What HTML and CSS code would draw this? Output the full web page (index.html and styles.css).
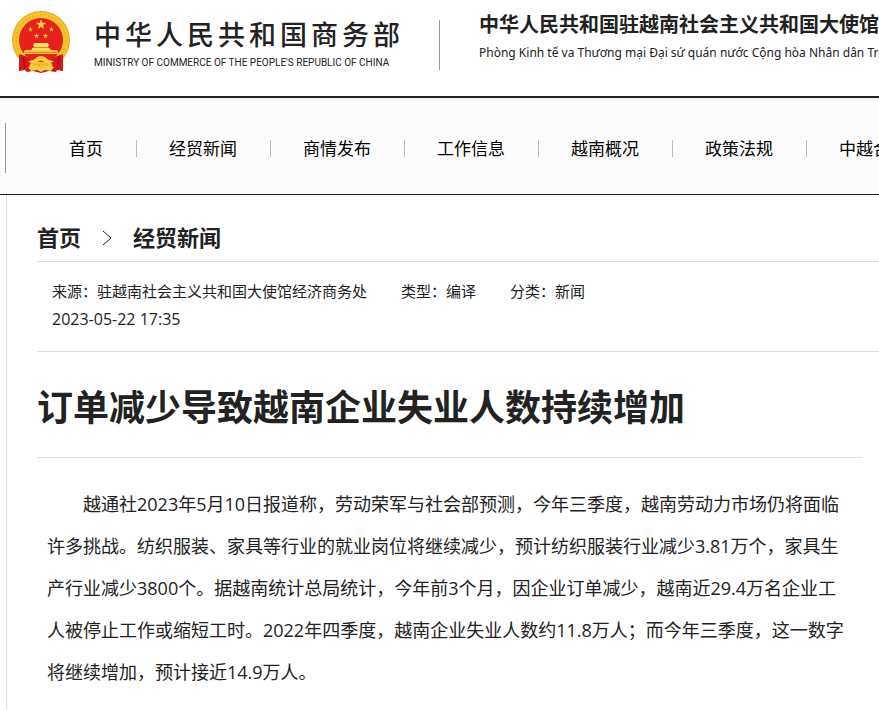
FILE: index.html
```
<!DOCTYPE html>
<html lang="zh-CN">
<head>
  <meta charset="UTF-8">
  <meta name="viewport" content="width=device-width, initial-scale=1.0">
  <title>订单减少导致越南企业失业人数持续增加</title>
  <link rel="stylesheet" href="styles.css">
</head>
<body>
  <header class="header">
    <a class="logo" href="#">
      <svg class="emblem" viewBox="0 0 58 62" aria-hidden="true">
        <path d="M8 42L7 60l6-1 2 2 6-1 8 2 8-2 7 1 1-2 6 1-1-18z" fill="#c9141b"/>
        <circle cx="29" cy="29" r="29" fill="#e3a51c"/>
        <circle cx="29" cy="29" r="28" fill="#f6c42c"/>
        <circle cx="29" cy="29" r="25" fill="none" stroke="#eeb426" stroke-width="2" stroke-dasharray="2 2"/>
        <circle cx="29" cy="29" r="22" fill="#e5211d"/>
        <path d="M29 8l1.300 3.700 3.900.1-3.100 2.400 1.100 3.800-3.200-2.200-3.200 2.200 1.100-3.800-3.100-2.400 3.900-.1z" fill="#ffd33a"/>
        <g fill="#f5b934">
          <path id="star" d="M18.500 15.500l.7 1.900h2l-1.600 1.300.6 2-1.700-1.200-1.700 1.200.6-2-1.600-1.300h2z"/>
          <use href="#star" x="21"/>
          <use href="#star" x="6" y="6.500"/>
          <use href="#star" x="15" y="6.500"/>
        </g>
        <path d="M22 32h14l1 3h-1v2h2l1 4H19l1-4h2v-2h-1z" fill="#ffd966"/>
        <path d="M21 36.500h16" stroke="#d98b1c" stroke-width="1"/>
        <path d="M13 39h32l2 4H11z" fill="#f9c63a"/>
        <path d="M13 41.500h32" stroke="#e08a1d" stroke-width="1"/>
        <path d="M7 43q8 2 13 6l-5 11-2-2-6 2zM51 43q-8 2-13 6l5 11 2-2 6 2z" fill="#d3171c"/>
        <path d="M11 46l2 11M47 46l-2 11" stroke="#a80d13" stroke-width="1.500"/>
        <path d="M16 50q6 0 9-4 4-2 8 0 3 4 9 4-5 4-9 1-4-3-8 0-4 3-9-1z" fill="#f8ce48"/>
        <path d="M16 56q8-2 10 0l3 1 3-1q2-2 10 0l-3 4-6-1-4 2-4-2-6 1z" fill="#f6cf51"/>
      </svg>
      <span class="logo-text">
        <span class="logo-cn">中华人民共和国商务部</span>
        <span class="logo-en">MINISTRY OF COMMERCE OF THE PEOPLE'S REPUBLIC OF CHINA</span>
      </span>
    </a>
    <div class="office">
      <div class="office-cn">中华人民共和国驻越南社会主义共和国大使馆经济商务处</div>
      <div class="office-vn" lang="vi">Phòng Kinh tế va Thương mại Đại sứ quán nước Cộng hòa Nhân dân Trung Hoa</div>
    </div>
  </header>

  <nav class="nav">
    <ul class="nav-list">
      <li><a href="#">首页</a></li>
      <li><a href="#">经贸新闻</a></li>
      <li><a href="#">商情发布</a></li>
      <li><a href="#">工作信息</a></li>
      <li><a href="#">越南概况</a></li>
      <li><a href="#">政策法规</a></li>
      <li><a href="#">中越合作</a></li>
    </ul>
  </nav>

  <main class="main">
    <div class="crumbs">
      <a href="#">首页</a>
      <svg class="chevron" viewBox="0 -4 10 20" aria-hidden="true"><path d="M1 0l8 7-8 7" fill="none" stroke="#222" stroke-width="1"/></svg>
      <a href="#">经贸新闻</a>
    </div>
    <div class="meta">
      <span>来源：驻越南社会主义共和国大使馆经济商务处</span>
      <span>类型：编译</span>
      <span>分类：新闻</span>
      <time class="meta-time" datetime="2023-05-22T17:35">2023-05-22 17:35</time>
    </div>
    <article class="article">
      <h1>订单减少导致越南企业失业人数持续增加</h1>
      <p>越通社2023年5月10日报道称，劳动荣军与社会部预测，今年三季度，越南劳动力市场仍将面临许多挑战。纺织服装、家具等行业的就业岗位将继续减少，预计纺织服装行业减少3.81万个，家具生产行业减少3800个。据越南统计总局统计，今年前3个月，因企业订单减少，越南近29.4万名企业工人被停止工作或缩短工时。2022年四季度，越南企业失业人数约11.8万人；而今年三季度，这一数字将继续增加，预计接近14.9万人。</p>
    </article>
  </main>
</body>
</html>
```
FILE: styles.css
```
* {
  box-sizing: border-box;
  margin: 0;
  padding: 0;
}

body {
  font-family: "Open Sans", "Noto Sans CJK SC", sans-serif;
  color: #222;
  background: #fff;
  min-height: 100vh;
  display: flex;
  flex-direction: column;
  overflow-x: hidden;
}

a {
  color: inherit;
  text-decoration: none;
}

.header {
  display: flex;
  align-items: flex-start;
  height: 98px;
  padding: 11px 0 0 12px;
  border-bottom: 2px solid #222;
  overflow: hidden;
}

.logo {
  display: flex;
  flex-shrink: 0;
  gap: 24px;
}

.emblem {
  width: 58px;
  height: 62px;
}

.logo-text {
  display: flex;
  flex-direction: column;
  width: 310px;
  padding-top: 8px;
  white-space: nowrap;
}

.logo-cn {
  font-size: 27px;
  font-weight: 500;
  line-height: 32px;
  letter-spacing: 4px;
}

.logo-en {
  font-family: Roboto, "Liberation Sans", sans-serif;
  font-size: 10px;
  line-height: 24px;
}

.office {
  flex-shrink: 0;
  height: 50px;
  margin: 9px 0 0 35px;
  padding-left: 39px;
  border-left: 1px solid #999;
  white-space: nowrap;
}

.office-cn {
  margin-top: -9px;
  font-size: 20px;
  font-weight: bold;
  line-height: 28px;
}

.office-vn {
  font-family: "Noto Sans", sans-serif;
  font-size: 12px;
  line-height: 28px;
}

.nav {
  padding: 25px 0 21px 5px;
  background: #fcfcfc;
  border-bottom: 1px solid #222;
  box-shadow: inset 0 4px 4px -2px #eee;
  overflow: hidden;
}

.nav-list {
  display: flex;
  align-items: center;
  height: 50px;
  padding-left: 30px;
  border-left: 1px solid #999;
  list-style: none;
}

.nav-list li {
  flex-shrink: 0;
  padding: 0 33px;
  color: #000;
  font-size: 17px;
  line-height: 17px;
}

.nav-list li + li {
  padding-left: 32px;
  border-left: 1px solid #bbb;
}

.main {
  flex: 1;
  margin-left: 6px;
  padding-left: 30px;
  border-left: 1px solid #ddd;
}

.crumbs {
  display: flex;
  align-items: center;
  gap: 21px;
  padding: 26px 0 8px;
  border-bottom: 1px solid #ddd;
  font-size: 22px;
  font-weight: bold;
  line-height: 32px;
}

.chevron {
  width: 10px;
  height: 20px;
}

.meta {
  display: flex;
  flex-wrap: wrap;
  column-gap: 34px;
  padding: 15px 15px 18px;
  border-bottom: 1px solid #ddd;
  font-size: 15px;
  line-height: 28px;
}

.meta-time {
  width: 100%;
  font-size: 16px;
}

.article {
  margin-right: 17px;
}

.article h1 {
  padding: 32px 0 25px;
  border-bottom: 1px solid #ddd;
  font-size: 36px;
  line-height: 48px;
}

.article p {
  padding: 25px 10px 16px;
  font-size: 18px;
  line-height: 42px;
  text-indent: 2em;
}
```
